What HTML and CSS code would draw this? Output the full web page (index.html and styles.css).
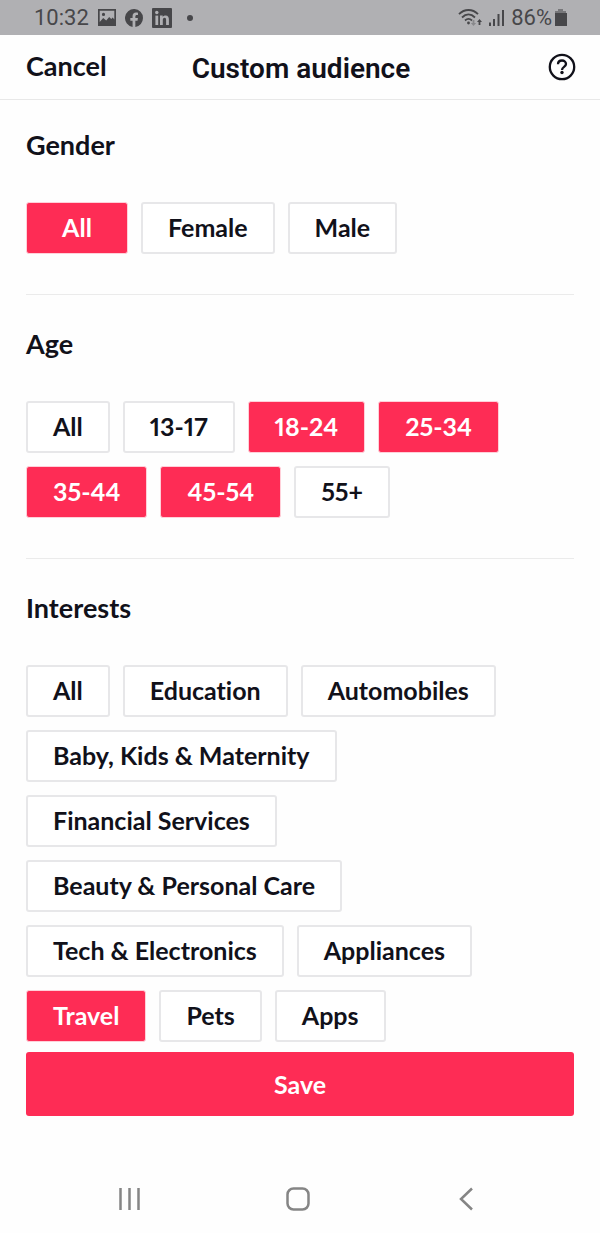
FILE: index.html
```
<!DOCTYPE html>
<html lang="en">
<head>
    <meta charset="UTF-8">
    <meta name="viewport" content="width=device-width, initial-scale=1.0">
    <title>Custom audience</title>
    <link rel="stylesheet" href="styles.css">
</head>
<body>
    <div class="status-bar">
        <div class="status-left">
            <span>10:32</span>
            <svg width="18" height="18" viewBox="0 0 18 18">
                <path fill="#47474a" fill-rule="evenodd" d="M0 0h18v17H0zM1.700 1.700v11.300l3.500-4 3 2.500 3-3.500 2 2 1.500-1.500 1.600 2V1.700zM5.500 3.800a1.600 1.600 0 1 1 0 3.200 1.600 1.600 0 0 1 0-3.200z"/>
            </svg>
            <svg width="18" height="18" viewBox="0 0 24 24">
                <path fill="#47474a" d="M24 12a12 12 0 1 0-13.900 11.900v-8.400H7.100V12h3V9.400c0-3 1.800-4.700 4.500-4.700 1.300 0 2.700.2 2.700.2v3h-1.500c-1.500 0-2 .9-2 1.900V12h3.400l-.5 3.500h-2.900v8.400A12 12 0 0 0 24 12z"/>
            </svg>
            <svg width="20" height="20" viewBox="0 0 20 20">
                <rect width="20" height="20" rx="1" fill="#47474a"/>
                <g fill="#b0b0b3">
                    <circle cx="4.800" cy="4.500" r="1.700"/>
                    <path d="M3.400 7.600h2.800V17H3.400z"/>
                    <path d="M8 7.600h2.700v1.300c.6-1 1.600-1.500 2.800-1.500 2.700 0 3.400 1.800 3.400 4.200V17h-2.800v-4.800c0-1.300-.2-2.400-1.500-2.400-1.400 0-1.800 1-1.800 2.300V17H8z"/>
                </g>
            </svg>
            <span class="dot"></span>
        </div>
        <div class="status-right">
            <svg width="24" height="20" viewBox="0 0 24 20">
                <g fill="none" stroke="#47474a" stroke-width="1.800">
                    <path d="M1 6.200c5.500-5.600 13.500-5.600 19 0"/>
                    <path d="M4 9.500c4-4 9-4 13 0"/>
                    <path d="M7 12.500c2.200-2 4.800-2 7 0"/>
                </g>
                <circle cx="10.500" cy="15" r="1.400" fill="#47474a"/>
                <path d="M14.600 12h1.800v3h1.700l-2.600 3-2.600-3h1.700z" fill="#88888b"/>
                <path d="M20.600 17h1.800v-3H24l-2.500-3-2.500 3h1.600z" fill="#47474a"/>
            </svg>
            <svg width="17" height="18" viewBox="0 0 17 18">
                <path fill="#47474a" d="M1 13.500h2V17H1zM5 10h2v7H5zM9.500 5h2v12h-2zM14 1h2v16h-2z"/>
            </svg>
            <span>86%</span>
            <svg class="battery" width="14" height="20" viewBox="0 0 14 20">
                <path fill="#77777a" d="M4 1h5v2h3v3H1V3h3z"/>
                <path fill="#47474a" d="M1 5h12v13H1z"/>
            </svg>
        </div>
    </div>

    <header class="header">
        <button type="button" class="cancel">Cancel</button>
        <h1>Custom audience</h1>
        <button type="button" class="help" aria-label="Help">
            <svg width="28" height="28" viewBox="0 0 28 28" fill="none" stroke="#11111a" stroke-width="2.300">
                <circle cx="14" cy="14" r="12.200"/>
                <path d="M10 11.300c0-2.300 1.700-3.800 4-3.800s4 1.500 4 3.600c0 2.700-4 2.900-4 5.800"/>
                <circle cx="14" cy="19.500" r="1.700" fill="#11111a" stroke="none"/>
            </svg>
        </button>
    </header>

    <main>
        <section class="group">
            <h2>Gender</h2>
            <div class="chips">
                <button type="button" class="chip wide selected" aria-pressed="true">All</button>
                <button type="button" class="chip" aria-pressed="false">Female</button>
                <button type="button" class="chip" aria-pressed="false">Male</button>
            </div>
        </section>

        <section class="group">
            <h2>Age</h2>
            <div class="chips">
                <button type="button" class="chip" aria-pressed="false">All</button>
                <button type="button" class="chip" aria-pressed="false">13-17</button>
                <button type="button" class="chip selected" aria-pressed="true">18-24</button>
                <button type="button" class="chip selected" aria-pressed="true">25-34</button>
                <button type="button" class="chip selected" aria-pressed="true">35-44</button>
                <button type="button" class="chip selected" aria-pressed="true">45-54</button>
                <button type="button" class="chip" aria-pressed="false">55+</button>
            </div>
        </section>

        <section class="group">
            <h2>Interests</h2>
            <div class="chips">
                <button type="button" class="chip" aria-pressed="false">All</button>
                <button type="button" class="chip" aria-pressed="false">Education</button>
                <button type="button" class="chip" aria-pressed="false">Automobiles</button>
                <button type="button" class="chip" aria-pressed="false">Baby, Kids &amp; Maternity</button>
                <button type="button" class="chip" aria-pressed="false">Financial Services</button>
                <button type="button" class="chip" aria-pressed="false">Beauty &amp; Personal Care</button>
                <button type="button" class="chip" aria-pressed="false">Tech &amp; Electronics</button>
                <button type="button" class="chip" aria-pressed="false">Appliances</button>
                <button type="button" class="chip selected" aria-pressed="true">Travel</button>
                <button type="button" class="chip" aria-pressed="false">Pets</button>
                <button type="button" class="chip" aria-pressed="false">Apps</button>
            </div>
        </section>

        <button type="button" class="save">Save</button>
    </main>

    <nav class="nav-bar">
        <button type="button" aria-label="Recent apps">
            <svg width="28" height="28" viewBox="0 0 28 28" fill="none" stroke="#858585" stroke-width="2.500">
                <path d="M4.500 3v22M13.500 3v22M22.500 3v22"/>
            </svg>
        </button>
        <button type="button" aria-label="Home">
            <svg width="28" height="28" viewBox="0 0 28 28" fill="none" stroke="#858585" stroke-width="2.500">
                <rect x="3.500" y="3.500" width="21" height="21" rx="6"/>
            </svg>
        </button>
        <button type="button" aria-label="Back">
            <svg width="28" height="28" viewBox="0 0 28 28" fill="none" stroke="#858585" stroke-width="2.500">
                <path d="M20 3.500L9 14l11 10.500"/>
            </svg>
        </button>
    </nav>

    <script>
        document.querySelectorAll('.chip').forEach(function (chip) {
            chip.addEventListener('click', function () {
                const on = chip.classList.toggle('selected');
                chip.setAttribute('aria-pressed', on);
            });
        });
    </script>
</body>
</html>
```
FILE: styles.css
```
* {
    box-sizing: border-box;
}
body {
    margin: 0;
    min-height: 100vh;
    display: flex;
    flex-direction: column;
    font-family: Lato, sans-serif;
    font-variant-ligatures: none;
    background-color: #fefefe;
    color: #11111a;
}
button {
    font-family: inherit;
    font-variant-ligatures: inherit;
    color: inherit;
    background: none;
    border: none;
    padding: 0;
    cursor: pointer;
}
svg {
    display: block;
}
.status-bar {
    display: flex;
    justify-content: space-between;
    align-items: center;
    height: 35px;
    padding: 0 32px 0 34px;
    background-color: #b0b0b3;
    color: #47474a;
    font-family: Roboto, sans-serif;
    font-size: 22px;
}
.status-left,
.status-right {
    display: flex;
    align-items: center;
}
.status-left {
    gap: 9px;
}
.status-right {
    gap: 6px;
}
.battery {
    margin-left: -4px;
}
.dot {
    width: 6px;
    height: 6px;
    margin-left: 6px;
    border-radius: 50%;
    background-color: #47474a;
}
.header {
    display: grid;
    grid-template-columns: 1fr auto 1fr;
    align-items: center;
    height: 65px;
    padding: 0 24px 0 26px;
    border-bottom: 1px solid #e8e8e8;
}
.header h1 {
    margin: 3px 0 0;
    font-family: Roboto, sans-serif;
    font-size: 28px;
    font-weight: 600;
}
.cancel {
    justify-self: start;
    padding-bottom: 3px;
    font-size: 27px;
    font-weight: 700;
}
.help {
    justify-self: end;
}
main {
    padding: 0 26px;
}
.group {
    padding: 35px 0 40px;
    border-bottom: 1px solid #ebebeb;
}
.group:first-child {
    padding-top: 31px;
}
.group:last-of-type {
    padding-bottom: 10px;
    border-bottom: none;
}
.group h2 {
    margin: 0 0 43px;
    font-size: 27px;
    line-height: 28px;
    font-weight: 700;
}
.chips {
    display: flex;
    flex-wrap: wrap;
    gap: 13px;
}
.chip {
    height: 52px;
    padding: 0 25px 2px;
    border: 2px solid #e7e7e9;
    border-radius: 3px;
    background-color: #fff;
    font-size: 25px;
    font-weight: 700;
    font-variant-numeric: proportional-nums;
}
.wide {
    min-width: 102px;
}
.selected {
    padding: 0 26px 2px;
    border: 1px solid #ffd0d9;
    background-color: #fe2c55;
    color: #fff;
}
.save {
    width: 100%;
    height: 64px;
    border-radius: 3px;
    background-color: #fe2c55;
    color: #fff;
    font-size: 25px;
    font-weight: 700;
}
.nav-bar {
    display: flex;
    margin-top: auto;
    padding: 20px 50px 20px 46px;
}
.nav-bar button {
    flex: 1;
    display: flex;
    justify-content: center;
}
```
